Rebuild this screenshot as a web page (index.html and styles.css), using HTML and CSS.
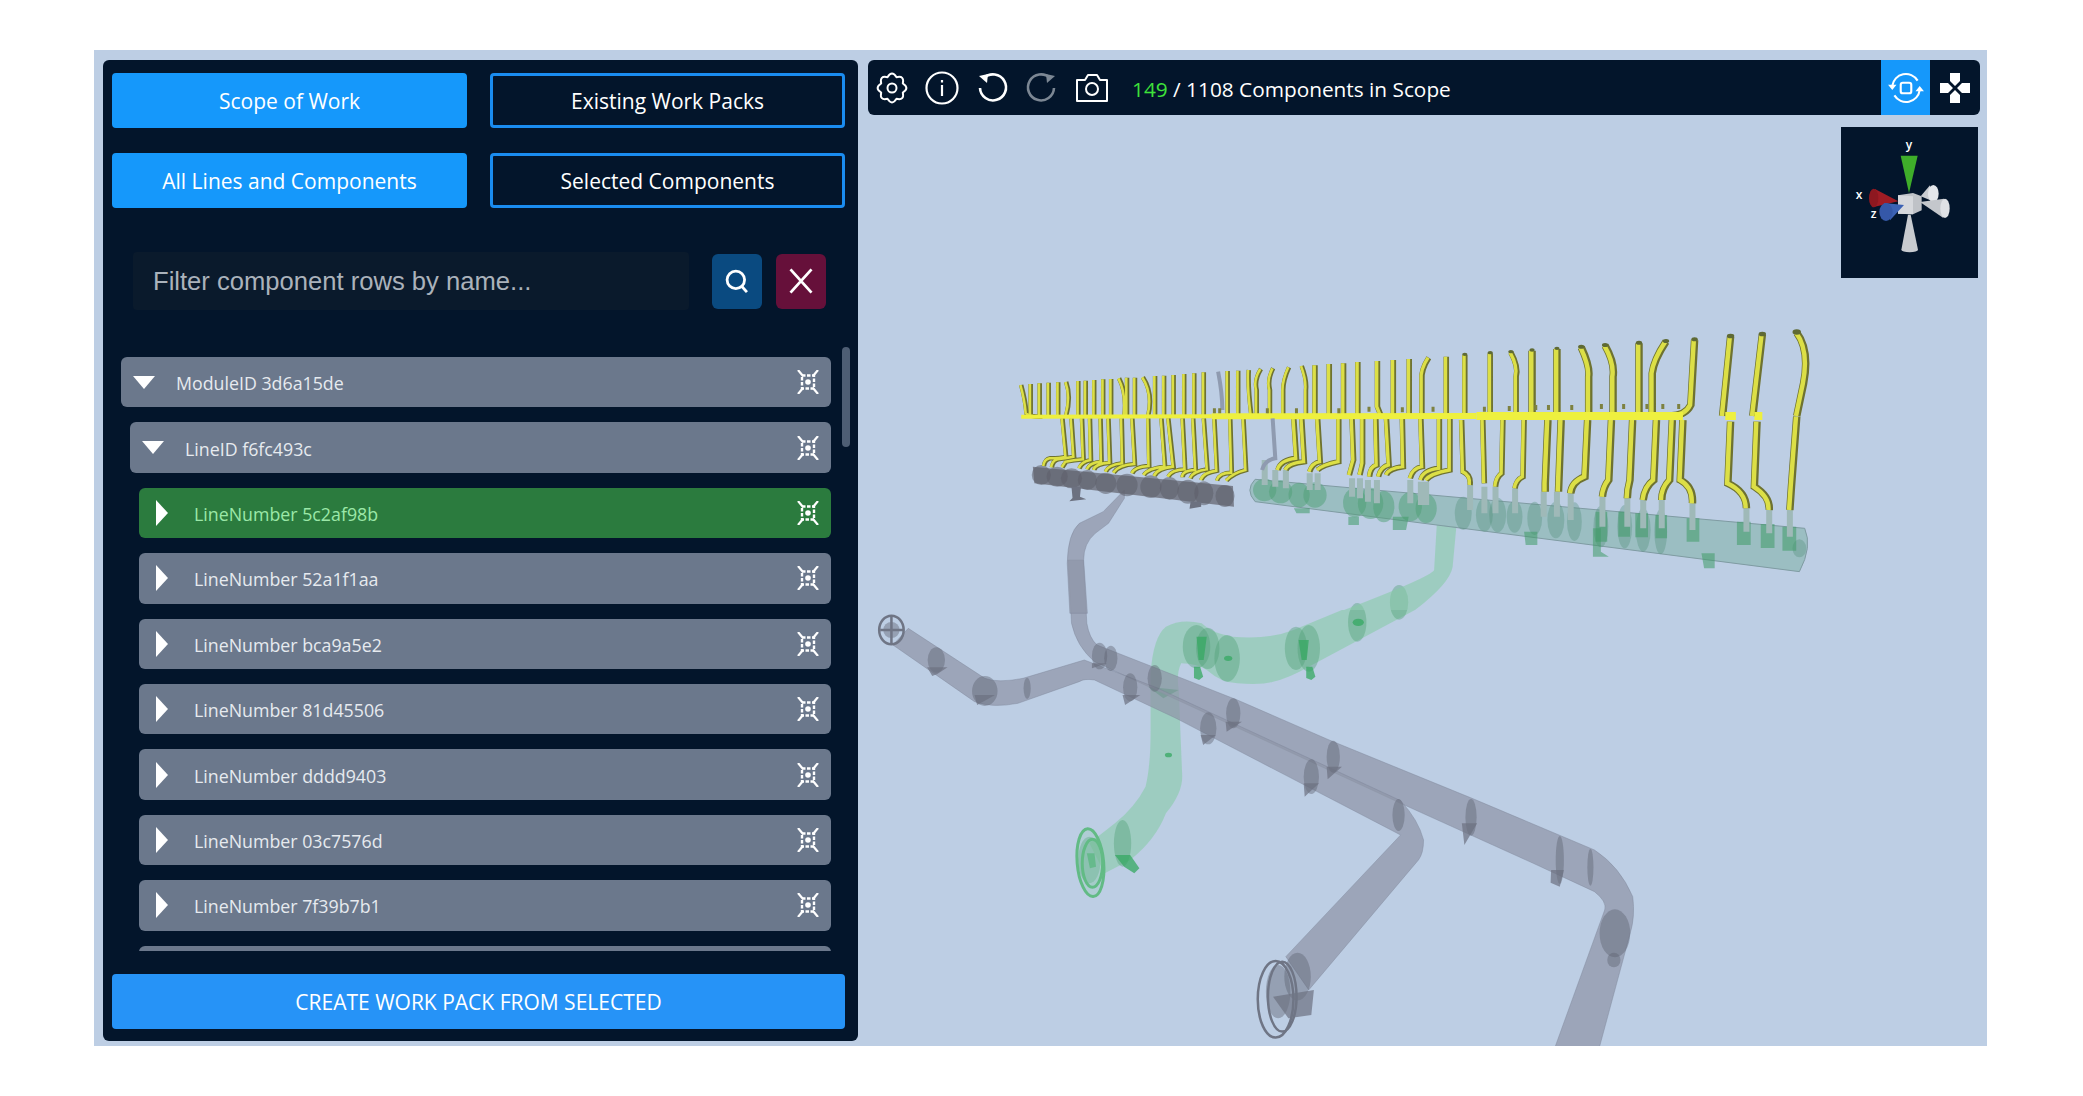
FILE: index.html
```html
<!DOCTYPE html>
<html lang="en">
<head>
  <meta charset="UTF-8">
  <title>Scope of Work</title>
  <link rel="stylesheet" href="styles.css">
</head>
<body>
  <svg width="0" height="0" class="defs">
    <symbol id="isolate" viewBox="0 0 24 24">
      <circle cx="12" cy="12" r="2.800" fill="#fff"/>
      <rect x="6" y="5.500" width="12" height="13" fill="none" stroke="#fff" stroke-width="2.400" stroke-dasharray="3.500 1.500"/>
      <path d="M2 0l5 6M22 0l-5 6M2 24l5-6M22 24l-5-6" stroke="#fff" stroke-width="2.200" fill="none"/>
    </symbol>
    <path id="up-left" class="riser" d="M40 225Q48 270 50 310Q60 322 80 320M58 222V318M75 220V318M92 218V318M110 217V318M125 216Q135 260 125 318M148 213V318M162 212V318M178 210V318M195 208V318M210 207V318M225 205Q240 250 235 318M240 203V318M255 203V318M270 202Q290 250 280 318M293 198V318M310 197V318M328 195V318M348 192V318M367 190V318M385 187V318M430 183V318M450 182V318M470 180Q468 230 475 318M493 177Q480 210 485 240V318M516 175Q505 210 510 240V318M546 172Q535 210 535 240V318M570 168Q580 210 578 240V318"/>
    <path id="up-mid" class="riser" d="M595 166V318M622 162V318M649 160V318M676 156V318M713 153V290L720 318M743 150V318M773 147V318M810 143Q795 180 797 210V318M843 140V318M878 135V318M926 130V318M965 127Q980 170 975 200V318"/>
    <path id="up-right" class="riser" d="M1005 122V318M1052 117V318M1098 112Q1115 170 1112 200V318M1143 107Q1162 160 1158 200V318M1207 100V318M1258 95Q1235 150 1232 190V318M1312 90L1305 285Q1295 318 1265 318M1380 80L1365 318M1440 74L1422 318M1505 68Q1530 120 1518 220L1505 318"/>
    <path id="down-left" class="riser" d="M118 325L125 440Q115 445 95 445Q85 448 83 468M135 325L140 440Q125 445 110 448Q100 452 98 472M155 325L158 448Q140 450 125 455L118 472M170 325L172 450Q155 455 150 475M190 325L192 455Q170 458 165 478M205 325L208 458Q180 462 178 480M230 325L232 460Q205 465 200 485M250 325L255 462Q225 465 215 488M280 325L282 468Q255 470 250 490M305 325L312 470Q280 475 272 495M318 325L328 470Q298 475 292 498M345 325L350 478Q325 480 318 500M365 325L370 480Q345 482 345 502M385 325L392 478Q365 485 360 505M405 325L410 482Q385 488 380 510M435 325L438 488Q415 488 410 512M460 325L465 480Q440 490 428 512"/>
    <path id="down-mid" class="riser" d="M555 325L560 445Q530 450 525 480M570 325L575 455Q545 460 540 480M600 325L605 455Q590 460 585 485M640 325L640 455Q610 465 600 480M665 325L668 450L660 495M685 325L685 460L680 495M710 325L712 465Q700 470 698 500M730 325L735 465Q720 470 715 500M760 325L762 470Q735 475 730 495M795 325L798 470Q780 475 775 505M830 325L830 475Q800 480 795 510M850 325L850 480Q815 490 805 510M872 330L875 485Q890 495 888 525M912 330L915 520M950 330L948 490Q938 500 936 530M990 330L988 500Q975 510 973 535"/>
    <path id="down-right" class="riser" d="M1035 330L1030 520V545M1060 330L1055 545M1110 330L1105 500Q1080 515 1078 550M1155 330L1150 510Q1140 530 1138 560M1195 330L1190 510Q1185 540 1185 565M1240 330L1235 510Q1218 530 1215 570M1270 330L1265 510Q1250 535 1250 570M1290 330L1285 510Q1310 530 1308 580M1380 335L1375 520Q1410 545 1410 595M1430 335L1425 530Q1455 560 1453 600M1505 320L1495 530L1492 600"/>
  </svg>

  <div class="frame">
    <!-- 3d model, traced from the viewer -->
    <svg class="scene" viewBox="94 50 1893 996">
      <g transform="translate(870 580) scale(.5102 .3333)">
        <!-- green branch -->
        <path class="pipe-green" d="M925 90L830 150Q780 180 710 170Q670 160 650 130Q610 115 580 140Q555 170 550 280L550 450Q550 560 540 620Q520 680 480 730L430 790L460 880L510 840Q560 780 580 700Q612 640 612 590L605 330Q600 280 610 250Q640 250 660 270Q690 310 720 310Q770 315 790 305Q820 295 860 260L1068 90Z"/>
        <g class="green-disc">
          <ellipse cx="640" cy="200" rx="27" ry="65"/><ellipse cx="662" cy="205" rx="23" ry="62"/>
          <ellipse cx="700" cy="235" rx="25" ry="70"/><ellipse cx="835" cy="205" rx="22" ry="65"/>
          <ellipse cx="860" cy="205" rx="22" ry="70"/><ellipse cx="955" cy="127" rx="18" ry="58"/>
          <ellipse cx="1037" cy="67" rx="18" ry="52"/><ellipse cx="495" cy="790" rx="17" ry="70"/>
          <ellipse cx="430" cy="840" rx="22" ry="70"/>
        </g>
        <g class="green-solid">
          <circle cx="957" cy="127" r="11"/><circle cx="702" cy="235" r="8"/><circle cx="585" cy="525" r="7"/>
          <path d="M635 260l12 0 6 30 -8 10 -10 -6zM855 260l12 0 6 30 -8 10 -10 -6zM640 170l20 0 -6 70 -10 0zM840 180l20 0 -4 60 -10 0zM480 825l30 0 18 40 -10 15 -20 -20zM425 820l15 0 3 40 -12 5zM545 320l60 10 -30 25z"/>
        </g>
        <g class="green-ring">
          <ellipse cx="432" cy="848" rx="26" ry="102" transform="rotate(-3 432 848)"/><ellipse cx="436" cy="850" rx="20" ry="72"/>
        </g>

        <!-- grey pipes -->
        <path class="pipe-grey" d="M418 -60L425 130Q430 175 445 195L720 360L900 480L1180 655L1420 810Q1470 860 1495 950Q1500 1010 1490 1060L1430 1400L1343 1400L1440 990Q1445 965 1420 935L1300 850L1040 670L560 330L440 245Q405 200 395 130L388 -60Z"/>
        <path class="pipe-grey" d="M75 145L225 295Q250 310 300 295L420 240L560 322L1040 662Q1075 720 1085 780Q1085 820 1075 840L860 1230L815 1130L1040 765L600 415L440 300Q420 295 410 305L290 370Q240 385 205 365L45 195Z"/>

        <g class="grey-disc">
          <ellipse cx="130" cy="240" rx="17" ry="38"/><ellipse cx="225" cy="333" rx="25" ry="45"/>
          <ellipse cx="308" cy="325" rx="7" ry="32"/><ellipse cx="450" cy="228" rx="15" ry="40"/>
          <ellipse cx="472" cy="235" rx="13" ry="38"/><ellipse cx="510" cy="322" rx="14" ry="42"/>
          <ellipse cx="558" cy="295" rx="14" ry="40"/><ellipse cx="663" cy="445" rx="16" ry="48"/>
          <ellipse cx="712" cy="400" rx="14" ry="45"/><ellipse cx="865" cy="590" rx="15" ry="52"/>
          <ellipse cx="908" cy="530" rx="13" ry="48"/><ellipse cx="1036" cy="705" rx="12" ry="48"/>
          <ellipse cx="1178" cy="712" rx="11" ry="55"/><ellipse cx="1352" cy="840" rx="8" ry="72"/>
          <ellipse cx="1412" cy="862" rx="6" ry="55"/><ellipse cx="1460" cy="1060" rx="30" ry="72"/>
          <ellipse cx="838" cy="1190" rx="26" ry="72"/><ellipse cx="1458" cy="1140" rx="13" ry="22"/>
          <ellipse cx="800" cy="1235" rx="24" ry="80"/><ellipse cx="42" cy="150" rx="16" ry="24"/>
        </g>
        <g class="grey-solid">
          <path d="M112 262l40 0 -20 20 -10 6zM205 345l40 0 -35 30zM495 345l35 0 -30 30zM648 465l30 0 -25 30zM697 425l32 0 -30 30zM850 610l30 0 -28 40zM895 560l30 0 -28 38zM1160 730l30 0 -25 65zM1335 870l25 0 -8 50 -18 -12zM435 250l30 0 -30 15zM790 1250l80 -20 -5 75 -45 10z"/>
        </g>
        <g class="grey-ring">
          <ellipse cx="42" cy="150" rx="24" ry="43"/><path d="M42 107V193M20 150H66"/>
          <ellipse cx="795" cy="1258" rx="35" ry="115"/><ellipse cx="808" cy="1250" rx="28" ry="105"/>
        </g>
      </g>

      <g transform="translate(1000 310) scale(.5294 .3333)">
        <!-- dark manifold -->
        <path class="pipe-grey" d="M235 540L195 605L150 640Q128 670 127 760L132 910L165 910L158 750Q158 700 180 670L205 640L235 565Z"/>
        <path class="manifold-dark" d="M62 470L440 528L442 590L65 520Z"/>
        <g class="dark-disc">
          <ellipse cx="78" cy="495" rx="18" ry="30"/><ellipse cx="108" cy="500" rx="20" ry="30"/><ellipse cx="135" cy="505" rx="20" ry="30"/>
          <ellipse cx="165" cy="510" rx="18" ry="30"/><ellipse cx="200" cy="520" rx="20" ry="32"/><ellipse cx="240" cy="525" rx="20" ry="34"/>
          <ellipse cx="285" cy="530" rx="20" ry="34"/><ellipse cx="320" cy="535" rx="18" ry="34"/><ellipse cx="355" cy="545" rx="20" ry="36"/>
          <ellipse cx="385" cy="550" rx="18" ry="36"/><ellipse cx="425" cy="558" rx="18" ry="33"/>
        </g>
        <path class="grey-solid" d="M135 530l18 0 -2 30 12 8 -32 6 6 -10zM360 575l20 0 0 15 -22 6z"/>

        <!-- green branch top and manifold -->
        <path class="pipe-green" d="M825 645L820 780Q815 800 650 900L784 900Q850 820 855 770L862 650Z"/>
        <path class="manifold-green" d="M482 508L1520 655Q1535 710 1510 785L482 575Q462 540 482 508Z"/>
        <g class="green-disc strong">
          <ellipse cx="500" cy="540" rx="22" ry="34"/><ellipse cx="530" cy="545" rx="22" ry="35"/><ellipse cx="565" cy="555" rx="20" ry="37"/>
          <ellipse cx="595" cy="555" rx="22" ry="38"/><ellipse cx="670" cy="578" rx="22" ry="44"/><ellipse cx="700" cy="580" rx="24" ry="47"/>
          <ellipse cx="725" cy="590" rx="20" ry="47"/><ellipse cx="775" cy="590" rx="22" ry="44"/><ellipse cx="805" cy="595" rx="20" ry="44"/>
        </g>
        <g class="grey-green-disc">
          <ellipse cx="875" cy="610" rx="16" ry="50"/><ellipse cx="915" cy="615" rx="16" ry="50"/><ellipse cx="940" cy="615" rx="16" ry="52"/>
          <ellipse cx="972" cy="620" rx="15" ry="48"/><ellipse cx="1010" cy="625" rx="14" ry="50"/><ellipse cx="1050" cy="630" rx="16" ry="55"/>
          <ellipse cx="1085" cy="635" rx="14" ry="58"/><ellipse cx="1135" cy="650" rx="14" ry="62"/><ellipse cx="1180" cy="650" rx="14" ry="65"/>
          <ellipse cx="1215" cy="660" rx="14" ry="65"/><ellipse cx="1248" cy="665" rx="12" ry="68"/><ellipse cx="1510" cy="715" rx="13" ry="27"/>
        </g>
        <g class="green-solid faded">
          <path d="M1125 605h22v90h-22zM1168 605h22v75h-22zM1200 610h24v72h-24zM1238 615h22v70h-22zM1297 625h24v70h-24zM1392 635h26v70h-26zM1437 642h26v72h-26zM1478 650h26v72h-26z"/>
          <path d="M555 595h30v15h-25zM658 620h20v25h-20zM742 620h30l-5 40h-25zM990 665h25v40h-22zM1120 655h15v70l15 15h-30zM1325 730h25v45h-20z"/>
        </g>
        <path class="riser-tail" d="M500 450V525M520 480V530M540 480V535M585 490V540M600 490V540M665 505V560M680 505V565M695 510V575M712 510V580M775 510V580M795 515V585M805 515V585M888 525V600M915 530V610M936 530V610M973 535V610M1027 545V620M1052 545V620M1078 550V630M1138 560V650M1185 565V650M1215 570V655M1250 570V655M1308 580V660M1410 595V665M1453 600V670M1492 600V680"/>

        <!-- yellow lines: dark base with a lighter line on top -->
        <g class="yellow-base thin"><use href="#up-left"/><use href="#down-left"/></g>
        <g class="yellow-base mid"><use href="#up-mid"/><use href="#down-mid"/></g>
        <g class="yellow-base thick"><use href="#up-right"/><use href="#down-right"/></g>
        <g class="yellow-top thin"><use href="#up-left"/><use href="#down-left"/></g>
        <g class="yellow-top mid"><use href="#up-mid"/><use href="#down-mid"/></g>
        <g class="yellow-top thick"><use href="#up-right"/><use href="#down-right"/></g>
        <g class="yellow-main">
          <path class="main-left" d="M40 320L400 319"/>
          <path class="main-mid" d="M400 319L900 318"/>
          <path class="main-right" d="M900 318L1290 318M1370 318H1390M1425 318H1440"/>
        </g>
        <path class="grey-riser" d="M412 185Q420 250 420 300M515 325L520 445Q500 450 495 480"/>
        <path class="stub" d="M405 295v15M415 295v15M505 295v15M560 295v15M640 295v15M697 290v15M760 292v15M818 290v15M915 290v15M962 288v15M1012 285v15M1036 285v15M1080 285v15M1136 282v15M1178 282v15M1222 282v15M1252 282v15M1282 282v15"/>
        <g class="caps">
          <circle cx="1312" cy="88" r="6"/><circle cx="1258" cy="93" r="6"/><circle cx="1207" cy="98" r="6"/><circle cx="1143" cy="105" r="6"/>
          <circle cx="1098" cy="110" r="6"/><circle cx="1052" cy="115" r="5"/><circle cx="1005" cy="120" r="5"/><circle cx="965" cy="125" r="5"/>
          <circle cx="926" cy="128" r="5"/><circle cx="878" cy="133" r="5"/><circle cx="1380" cy="78" r="7"/><circle cx="1440" cy="72" r="7"/><circle cx="1505" cy="66" r="8"/>
        </g>
      </g>
    </svg>

    <aside class="panel">
      <div class="tab-grid">
        <button class="tab active">Scope of Work</button>
        <button class="tab">Existing Work Packs</button>
        <button class="tab active">All Lines and Components</button>
        <button class="tab">Selected Components</button>
      </div>

      <div class="filter">
        <input class="filter-input" placeholder="Filter component rows by name...">
        <button class="square-btn search">
          <svg viewBox="0 0 24 24" width="28" height="28"><circle cx="11" cy="11" r="7.500" fill="none" stroke="#fff" stroke-width="2.400"/><path d="M16 16.500l4.500 5" stroke="#fff" stroke-width="2.400"/></svg>
        </button>
        <button class="square-btn clear">
          <svg viewBox="0 0 24 24" width="28" height="28"><path d="M3 2L21 22M21 2L3 22" stroke="#fff" stroke-width="2.400"/></svg>
        </button>
      </div>

      <div class="tree-wrap">
        <div class="tree">
          <div class="row level-0"><span class="caret down"></span><span class="row-name">ModuleID 3d6a15de</span><svg class="row-icon"><use href="#isolate"/></svg></div>
          <div class="row level-1"><span class="caret down"></span><span class="row-name">LineID f6fc493c</span><svg class="row-icon"><use href="#isolate"/></svg></div>
          <div class="row level-2 picked"><span class="caret"></span><span class="row-name">LineNumber 5c2af98b</span><svg class="row-icon"><use href="#isolate"/></svg></div>
          <div class="row level-2"><span class="caret"></span><span class="row-name">LineNumber 52a1f1aa</span><svg class="row-icon"><use href="#isolate"/></svg></div>
          <div class="row level-2"><span class="caret"></span><span class="row-name">LineNumber bca9a5e2</span><svg class="row-icon"><use href="#isolate"/></svg></div>
          <div class="row level-2"><span class="caret"></span><span class="row-name">LineNumber 81d45506</span><svg class="row-icon"><use href="#isolate"/></svg></div>
          <div class="row level-2"><span class="caret"></span><span class="row-name">LineNumber dddd9403</span><svg class="row-icon"><use href="#isolate"/></svg></div>
          <div class="row level-2"><span class="caret"></span><span class="row-name">LineNumber 03c7576d</span><svg class="row-icon"><use href="#isolate"/></svg></div>
          <div class="row level-2"><span class="caret"></span><span class="row-name">LineNumber 7f39b7b1</span><svg class="row-icon"><use href="#isolate"/></svg></div>
          <div class="row level-2"></div>
        </div>
        <div class="scroll-thumb"></div>
      </div>

      <button class="create-btn">CREATE WORK PACK FROM SELECTED</button>
    </aside>

    <main class="viewer">
      <div class="toolbar">
        <svg class="tool-icon" viewBox="-2 -2 40 40" fill="none" stroke="#fff" stroke-width="2.200">
          <path d="M13 6Q18 -2 23 6Q32.100 3.900 30 13Q38 18 30 23Q32.100 32.100 23 30Q18 38 13 30Q3.900 32.100 6 23Q-2 18 6 13Q3.900 3.900 13 6Z" stroke-linejoin="round"/>
          <circle cx="18" cy="18" r="5"/>
        </svg>
        <svg class="tool-icon" viewBox="0 0 36 36" fill="none" stroke="#fff" stroke-width="2.200">
          <circle cx="18" cy="18" r="15.500"/><path d="M18 15v11M18 10v2.500"/>
        </svg>
        <svg class="tool-icon" viewBox="0 0 36 36" fill="none" stroke="#fff" stroke-width="2.600">
          <path d="M10 8a13 13 0 1 1-4 10"/><path d="M5 6l9-2 -1 9z" fill="#fff" stroke="none"/>
        </svg>
        <svg class="tool-icon" viewBox="0 0 36 36" fill="none" stroke="#7c8794" stroke-width="2.600">
          <path d="M26 8a13 13 0 1 0 4 10"/><path d="M31 6l-9-2 1 9z" fill="#7c8794" stroke="none"/>
        </svg>
        <svg class="tool-icon" viewBox="0 0 36 36" fill="none" stroke="#fff" stroke-width="2">
          <path d="M3 10h8l3-5h9l3 5h7v21H3z" stroke-linejoin="round"/><circle cx="18" cy="19" r="6"/>
        </svg>
        <div class="scope-count"><span class="count-green">149</span> / 1108 Components in Scope</div>
        <div class="tool-right">
          <button class="orbit-btn">
            <svg viewBox="0 0 36 36" width="38" height="38" fill="none" stroke="#fff" stroke-width="2">
              <rect x="13" y="13" width="10" height="10" rx="2"/>
              <path d="M5 16a13 13 0 0 1 24-5M31 20a13 13 0 0 1-24 5"/>
              <path d="M1 15l8 0-4 5zM35 21l-8 0 4-5z" fill="#fff" stroke="none"/>
            </svg>
          </button>
          <button class="dpad-btn">
            <svg viewBox="0 0 30 30" width="30" height="30" fill="#fff">
              <path d="M10 0h10v8l-5 5-5-5zM10 30h10v-8l-5-5-5 5zM0 10h8l5 5-5 5H0zM30 10h-8l-5 5 5 5h8z"/>
            </svg>
          </button>
        </div>
      </div>

      <div class="gizmo">
        <svg viewBox="183 232 411 453" width="137" height="151">
          <path d="M362 318h51l-26 112z" fill="#3fae2a"/>
          <path d="M384 495h8l22 105a25 8 0 0 1-50 0z" fill="#c8cbd0"/>
          <path d="M422 440L450 407 464 457z" fill="#c9ccd1"/>
          <ellipse cx="460" cy="432" rx="16" ry="26" fill="#e4e6ea"/>
          <path d="M420 457L492 447 490 505z" fill="#c4c7cc"/>
          <ellipse cx="495" cy="476" rx="14" ry="29" fill="#dfe1e5"/>
          <path d="M354 437l45-7 26 10V482l-26 12-45-2z" fill="#bfc2c7"/>
          <path d="M354 437l45 3V494l-45-2z" fill="#d6d8dc"/>
          <path d="M355 455L285 418 278 473z" fill="#a01c24"/>
          <ellipse cx="281" cy="445" rx="14" ry="28" fill="#8e1820"/>
          <path d="M372 466L312 460 330 512z" fill="#3c62b4"/>
          <ellipse cx="318" cy="487" rx="20" ry="27" fill="#3558a8"/>
          <text x="237" y="448" class="axis-label" text-anchor="middle">x</text>
          <text x="387" y="298" class="axis-label" text-anchor="middle">y</text>
          <text x="281" y="506" class="axis-label" text-anchor="middle">z</text>
        </svg>
      </div>
    </main>
  </div>
</body>
</html>
```

FILE: styles.css
```css
body {
  margin: 0;
  padding: 50px 96px 50px 94px;
  background-color: #fff;
  font-family: 'Open Sans', 'Noto Sans', sans-serif;
  color: #fff;
}
button {
  font-family: inherit;
  cursor: pointer;
}
.defs {
  position: absolute;
}
.frame {
  position: relative;
  display: flex;
  gap: 10px;
  height: 981px;
  padding: 10px 7px 5px 9px;
  background-color: #bdcee4;
}
.scene {
  position: absolute;
  left: 0;
  top: 0;
  width: 100%;
  height: 100%;
}

/* left panel */
.panel {
  position: relative;
  display: flex;
  flex-direction: column;
  box-sizing: border-box;
  width: 755px;
  padding: 13px 13px 12px 9px;
  border-radius: 6px;
  background-color: #03152b;
}
.tab-grid {
  display: grid;
  grid-template-columns: 355px 355px;
  justify-content: space-between;
  row-gap: 25px;
}
.tab {
  height: 55px;
  padding: 0;
  border: 3px solid #1a8cf0;
  border-radius: 4px;
  background-color: #03152b;
  color: #fff;
  font-size: 21px;
  font-weight: 500;
}
.tab.active {
  border-color: #1598fb;
  background-color: #1598fb;
}
.filter {
  display: flex;
  align-items: center;
  margin: 44px 19px 0 21px;
}
.filter-input {
  box-sizing: border-box;
  width: 557px;
  height: 58px;
  margin-right: 23px;
  padding: 0 20px;
  border: none;
  border-radius: 4px;
  background-color: #0a1a2c;
  color: #fff;
  font-family: 'Liberation Sans', sans-serif;
  font-size: 25.600px;
}
.filter-input::placeholder {
  color: #aab2bb;
  opacity: 1;
}
.square-btn {
  display: flex;
  align-items: center;
  justify-content: center;
  width: 50px;
  height: 55px;
  padding: 0;
  border: none;
  border-radius: 6px;
}
.search {
  margin-right: 14px;
  background-color: #0a4a80;
}
.clear {
  background-color: #66103a;
}

/* tree */
.tree-wrap {
  position: relative;
  flex: 1;
  min-height: 0;
  margin-top: 47px;
}
.tree {
  display: flex;
  flex-direction: column;
  gap: 15px;
  height: 594px;
  overflow: hidden;
  margin-right: 5px;
}
.scroll-thumb {
  position: absolute;
  top: -10px;
  right: -5px;
  width: 8px;
  height: 100px;
  border-radius: 4px;
  background-color: #4e5e74;
}
.row {
  display: flex;
  flex-shrink: 0;
  align-items: center;
  box-sizing: border-box;
  height: 50.400px;
  margin-right: 9px;
  border-radius: 6px;
  background-color: #6b788c;
  color: #e6eaef;
  font-size: 17.800px;
}
.level-0 { margin-left: 9px; }
.level-1 { margin-left: 18px; }
.level-2 { margin-left: 27px; }
.row.picked {
  background-color: #2b7b3e;
  color: #9be8a8;
}
.caret {
  flex-shrink: 0;
  box-sizing: border-box;
  width: 43px;
  margin-left: 17px;
  margin-right: -5px;
}
.caret::before {
  content: "";
  display: block;
  width: 0;
  height: 0;
  border-top: 13px solid transparent;
  border-bottom: 13px solid transparent;
  border-left: 12px solid #fff;
}
.caret.down {
  margin-left: 12px;
  margin-right: 0;
}
.caret.down::before {
  border-top: 13px solid #fff;
  border-bottom: 0;
  border-left: 11px solid transparent;
  border-right: 11px solid transparent;
}
.row-name {
  flex: 1;
  padding-top: 2px;
}
.row-icon {
  width: 24px;
  height: 24px;
  margin-right: 11px;
}

.create-btn {
  flex-shrink: 0;
  height: 55px;
  border: none;
  border-radius: 4px;
  background-color: #2693f7;
  color: #fff;
  font-size: 21px;
  font-weight: 500;
}

/* right side */
.viewer {
  position: relative;
  flex: 1;
}
.toolbar {
  display: flex;
  align-items: center;
  gap: 14px;
  height: 55px;
  padding-left: 6px;
  border-radius: 6px;
  background-color: #03152b;
}
.tool-icon {
  flex-shrink: 0;
  width: 36px;
  height: 36px;
}
.scope-count {
  margin-left: 8px;
  padding-top: 2px;
  font-size: 20.800px;
  font-weight: 500;
}
.count-green {
  color: #3ee23a;
}
.tool-right {
  display: flex;
  align-items: stretch;
  align-self: stretch;
  margin-left: auto;
}
.orbit-btn {
  display: flex;
  align-items: center;
  justify-content: center;
  width: 49px;
  padding: 0;
  border: none;
  background-color: #1598fb;
}
.dpad-btn {
  display: flex;
  align-items: center;
  justify-content: center;
  width: 50px;
  padding: 0;
  border: none;
  background: none;
}
.gizmo {
  position: absolute;
  top: 67px;
  right: 2px;
  width: 137px;
  height: 151px;
  background-color: #03152b;
}
.axis-label {
  fill: #fff;
  font-family: 'Open Sans', sans-serif;
  font-size: 36px;
  font-weight: 600;
}

/* 3d scene */
.pipe-grey {
  fill: #8f96a8;
  fill-opacity: .72;
  stroke: #7b8295;
  stroke-opacity: .4;
  vector-effect: non-scaling-stroke;
}
.pipe-green {
  fill: #86cba6;
  fill-opacity: .58;
}
.green-disc ellipse {
  fill: #4f9f75;
  fill-opacity: .4;
}
.green-disc.strong ellipse {
  fill-opacity: .5;
}
.grey-green-disc ellipse {
  fill: #4f8f78;
  fill-opacity: .35;
}
.grey-disc ellipse {
  fill: #5c6270;
  fill-opacity: .42;
}
.grey-solid path {
  fill: #6c7180;
  fill-opacity: .7;
}
path.grey-solid {
  fill: #6c7180;
}
.green-solid path, .green-solid circle {
  fill: #35a862;
  fill-opacity: .75;
}
.green-solid.faded path {
  fill: #3f9b68;
  fill-opacity: .55;
}
.green-ring ellipse {
  fill: #86cba6;
  fill-opacity: .25;
  stroke: #62bb85;
  stroke-width: 3;
  vector-effect: non-scaling-stroke;
}
.grey-ring ellipse, .grey-ring path {
  fill: none;
  stroke: #6f7585;
  stroke-width: 2.500;
  vector-effect: non-scaling-stroke;
}
.manifold-dark {
  fill: #6a6d78;
  fill-opacity: .8;
}
.dark-disc ellipse {
  fill: #5c5f6a;
  fill-opacity: .55;
}
.manifold-green {
  fill: #7fb0a6;
  fill-opacity: .55;
  stroke: #7f9ba2;
  vector-effect: non-scaling-stroke;
}
.riser-tail {
  fill: none;
  stroke: #9fb9b8;
  stroke-width: 6;
  vector-effect: non-scaling-stroke;
}
.riser {
  fill: none;
  vector-effect: non-scaling-stroke;
}
.yellow-base { stroke: #6e7230; }
.yellow-base.thin { stroke-width: 4.500; }
.yellow-base.mid { stroke-width: 5.500; }
.yellow-base.thick { stroke-width: 7.500; }
.yellow-top {
  stroke: #dcdf46;
  transform: translateX(-1.500px);
}
.yellow-top.thin { stroke-width: 2.600; }
.yellow-top.mid { stroke-width: 3.400; }
.yellow-top.thick { stroke-width: 4.500; }
.yellow-main path {
  fill: none;
  stroke: #eef03f;
  vector-effect: non-scaling-stroke;
}
.main-left { stroke-width: 4; }
.main-mid { stroke-width: 6; }
.main-right { stroke-width: 8; }
.grey-riser {
  fill: none;
  stroke: #8f9bb0;
  stroke-width: 4;
  vector-effect: non-scaling-stroke;
}
.stub {
  fill: none;
  stroke: #7d8140;
  stroke-width: 3;
  vector-effect: non-scaling-stroke;
}
.caps circle {
  fill: #5f6a34;
}
```
